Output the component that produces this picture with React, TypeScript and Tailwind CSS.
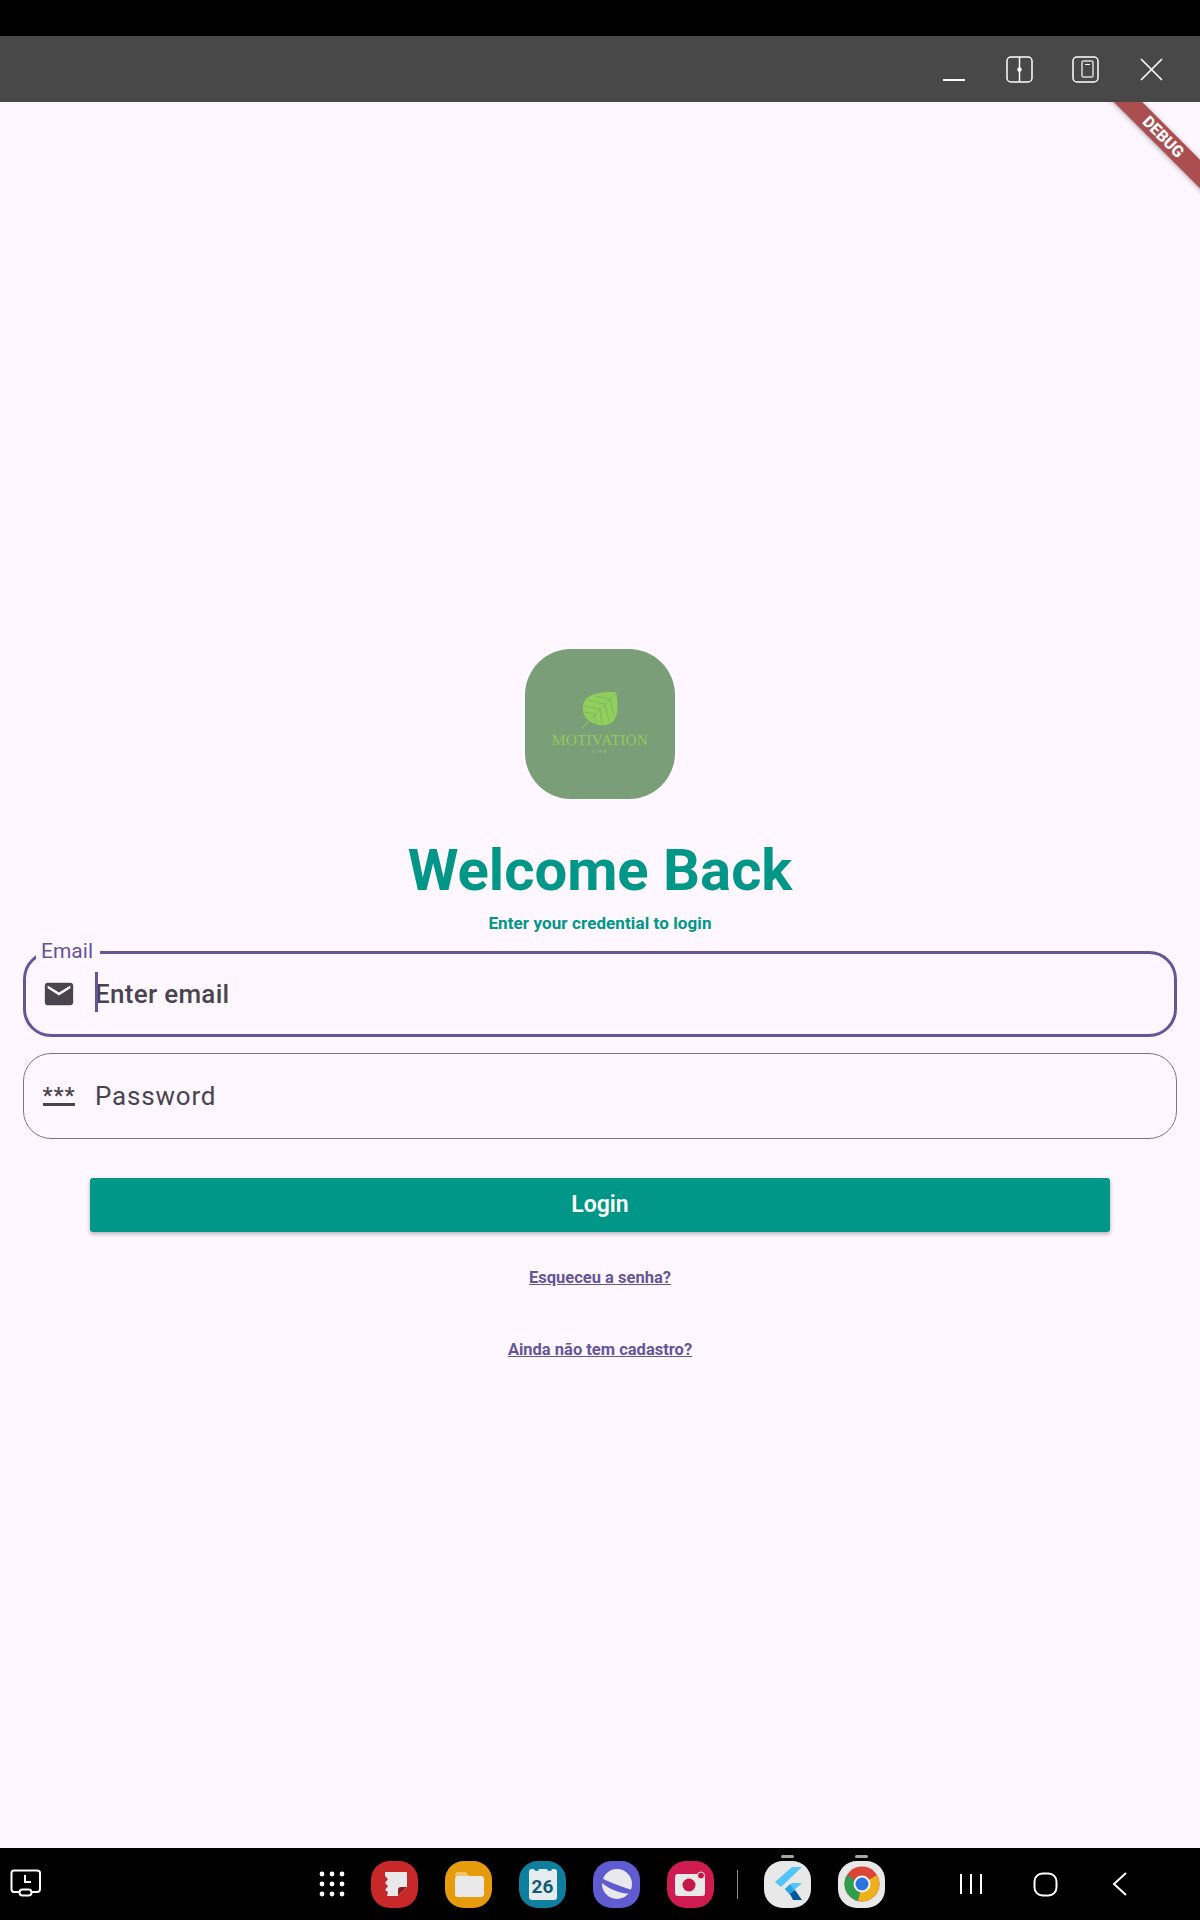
import { FC, ReactNode } from "react";

const roboto = "font-['Roboto',sans-serif]";

const LeafLogo: FC = () => (
  <svg width="38" height="38" viewBox="0 0 38 38">
    <path d="M1 37 L14 24" stroke="#8fcb5c" strokeWidth="1" fill="none" />
    <path
      d="M35 1 C26 1 11 1 5 8 C0 14 1 24 7 29 C14 35 27 37 33 29 C38 22 37 12 35 1 Z"
      fill="#8fcf5a"
    />
    <path
      d="M35 2 L10 28 M29 8 L14 5 M24 13 L7 9 M19 18 L3 15 M14 23 L3 21 M29 8 L33 24 M24 13 L28 31 M19 18 L21 33 M14 23 L15 32"
      stroke="#7a9e78"
      strokeWidth="0.6"
      fill="none"
    />
  </svg>
);

const MailIcon: FC = () => (
  <svg width="36" height="36" viewBox="0 0 24 24" fill="#49454f">
    <path d="M20 4H4c-1.100 0-1.990.900-1.990 2L2 18c0 1.100.900 2 2 2h16c1.100 0 2-.900 2-2V6c0-1.100-.900-2-2-2zm0 4l-8 5-8-5V6l8 5 8-5v2z" />
  </svg>
);

const Field: FC<{ icon: ReactNode; focused?: boolean; label: string }> = ({ icon, focused, label }) => (
  <div
    className={
      focused
        ? "relative flex h-[86px] items-center rounded-[28px] border-[3px] border-[#65559a] pl-[16px]"
        : "relative flex h-[86px] items-center rounded-[28px] border border-[#79747e] pl-[18px]"
    }
  >
    <div className="flex w-[34px] shrink-0 justify-center">{icon}</div>
    <div
      className={
        focused
          ? "relative ml-[19px] text-[26px] font-medium tracking-[0.3px] text-[#49454f]"
          : "ml-[19px] text-[26px] tracking-[0.8px] text-[#49454f]"
      }
    >
      {focused && <span className="absolute left-0 top-[-3px] h-[40px] w-[3px] bg-[#65559a]" />}
      {label}
    </div>
    {focused && (
      <span className="absolute left-[10px] top-[-16px] bg-[#fef7ff] pr-[7px] pl-[5px] text-[21px] leading-[26px] text-[#65559a]">
        Email
      </span>
    )}
  </div>
);

const Squircle: FC<{ bg: string; children: ReactNode; pill?: boolean }> = ({ bg, children, pill }) => (
  <div className={`relative flex h-[47px] w-[47px] items-center justify-center overflow-visible rounded-[40%] ${bg}`}>
    {pill && <span className="absolute left-[17px] top-[-6px] h-[3px] w-[13px] rounded-full bg-[#a6a6a6]" />}
    {children}
  </div>
);

const Dock: FC = () => (
  <div className="flex h-[72px] shrink-0 items-center bg-black">
    <svg className="ml-[10px]" width="32" height="30" viewBox="0 0 32 30" fill="none" stroke="#fff" strokeWidth="2">
      <path d="M10 23 H4 Q1.500 23 1.500 20 V4 Q1.500 1.500 4 1.500 H27 Q30 1.500 30 4 V20 Q30 23 27 23 H22" />
      <rect x="9.500" y="20.500" width="12" height="6" rx="3" />
      <path d="M15 6 V13 H21" />
    </svg>
    <svg className="ml-[277px]" width="26" height="26" viewBox="0 0 26 26" fill="#fff">
      {[3, 13, 23].map((y) =>
        [3, 13, 23].map((x) => <circle key={`${x}-${y}`} cx={x} cy={y} r="2.400" />)
      )}
    </svg>
    <div className="ml-[26px] flex items-center gap-[27px]">
      <Squircle bg="bg-[#c9282a]">
        <svg width="28" height="28" viewBox="0 0 28 28">
          <path d="M4 2 H26 V17 L17 26 H6 L7 22 L4 20 L7 16 L4 13 L7 9 L4 6 Z" fill="#e8e8e8" />
          <path d="M26 17 L17 26 V20 Q17 17 20 17 Z" fill="#8f1e1e" />
        </svg>
      </Squircle>
      <Squircle bg="bg-[#e59b0c]">
        <svg width="30" height="26" viewBox="0 0 30 26">
          <path d="M1 5 Q1 1 4 1 H12 L15 5 Z" fill="#f2c46c" />
          <rect x="1" y="5" width="29" height="21" rx="3" fill="#e9e9e9" />
        </svg>
      </Squircle>
      <Squircle bg="bg-[#0f7f9f]">
        <div className="relative mt-[1px] flex h-[31px] w-[28px] items-end justify-center rounded-[3px] bg-[#e6ecee] pb-[1px] font-['Roboto',sans-serif] text-[19px] leading-[24px] font-bold text-[#115a78]">
          <span className="absolute top-[-1px] left-[5px] h-[3px] w-[5px] rounded-b-full bg-[#0f7f9f]" />
          <span className="absolute top-[-1px] right-[5px] h-[3px] w-[5px] rounded-b-full bg-[#0f7f9f]" />
          26
        </div>
      </Squircle>
      <Squircle bg="bg-[#5f5bd0]">
        <svg width="40" height="36" viewBox="0 0 40 36">
          <circle cx="20" cy="18" r="15" fill="#e8e8ee" />
          <path d="M2 12 C8 20 24 28 37 26 C28 23 12 18 2 12 Z" fill="#5f5bd0" stroke="#5f5bd0" strokeWidth="2.500" />
        </svg>
      </Squircle>
      <Squircle bg="bg-[#cf1c50]">
        <svg width="32" height="26" viewBox="0 0 32 26">
          <rect x="0" y="3" width="30" height="22" rx="3" fill="#e9e9e9" />
          <circle cx="14" cy="14" r="6.500" fill="#c4174a" />
          <circle cx="26" cy="4.500" r="3.500" fill="#c4174a" stroke="#e9e9e9" strokeWidth="1" />
        </svg>
      </Squircle>
    </div>
    <div className="ml-[23px] h-[29px] w-px bg-[#8d8d8d]" />
    <div className="ml-[26px] flex items-center gap-[27px]">
      <Squircle bg="bg-[#e8e8e8]" pill>
        <svg width="30" height="36" viewBox="0 0 30 36">
          <path d="M19 1 H29 L8 21 L2 16 Z" fill="#54c5f8" />
          <path d="M19 17 H29 L17 28 L12 23 Z" fill="#54c5f8" />
          <path d="M12 23 L17 18 L23 27 L17 29 Z" fill="#29a6dc" />
          <path d="M17 28 L22 24 L29 34 H20 Z" fill="#01579b" />
        </svg>
      </Squircle>
      <Squircle bg="bg-[#e8e8e8]" pill>
        <svg width="36" height="36" viewBox="0 0 36 36">
          <circle cx="18" cy="18" r="17.500" fill="#db4437" />
          <path d="M18 18 L3 9 A17.500 17.500 0 0 0 14 35 Z" fill="#2f9e4f" />
          <path d="M18 18 L33 9 A17.500 17.500 0 0 1 14 35 Z" fill="#edb11d" />
          <circle cx="18" cy="18" r="8.500" fill="#f3f3f3" />
          <circle cx="18" cy="18" r="6.500" fill="#2a73e0" />
        </svg>
      </Squircle>
    </div>
    <svg className="ml-[74px]" width="24" height="24" viewBox="0 0 24 24" stroke="#fff" strokeWidth="2" fill="none">
      <path d="M2 2 V22 M12 2 V22 M22 2 V22" />
    </svg>
    <svg className="ml-[50px]" width="25" height="25" viewBox="0 0 25 25" stroke="#fff" strokeWidth="2" fill="none">
      <rect x="1.500" y="1.500" width="22" height="22" rx="8" />
    </svg>
    <svg className="ml-[54px]" width="16" height="26" viewBox="0 0 16 26" stroke="#fff" strokeWidth="2" fill="none">
      <path d="M14 2 L2 13 L14 24" />
    </svg>
  </div>
);

const App: FC = () => {
  return (
    <div className={`relative flex h-[1920px] w-[1200px] flex-col overflow-hidden bg-[#fef7ff] ${roboto}`}>
      <div className="relative z-10 h-[36px] shrink-0 bg-black" />
      <div className="relative z-10 flex h-[66px] shrink-0 items-center bg-[#484849] pl-[943px]">
        <div className="mt-[22px] h-[2px] w-[22px] bg-white" />
        <svg className="ml-[41px]" width="27" height="27" viewBox="0 0 27 27" fill="none" stroke="#fff" strokeWidth="1.500">
          <rect x="1" y="1" width="25" height="25" rx="4" />
          <path d="M13.500 1 V26" />
          <circle cx="13.500" cy="13.500" r="2.200" fill="#fff" stroke="none" />
        </svg>
        <svg className="ml-[39px]" width="27" height="27" viewBox="0 0 27 27" fill="none" stroke="#fff" strokeWidth="1.500">
          <rect x="1" y="1" width="25" height="25" rx="4" />
          <rect x="10" y="5" width="11" height="16" rx="1.500" stroke="#d8d8d8" />
          <path d="M13 8.500 H18" strokeWidth="1" />
        </svg>
        <svg className="ml-[41px]" width="23" height="23" viewBox="0 0 23 23" fill="none" stroke="#fff" strokeWidth="1.700">
          <path d="M1 1 L22 22 M22 1 L1 22" />
        </svg>
      </div>

      {/* debug banner */}
      <div className="absolute left-[1083px] top-[127px] flex h-[20px] w-[160px] rotate-45 items-center justify-center bg-[#ab4e50] text-[16px] leading-none font-extrabold text-white shadow-[0_1px_5px_rgba(0,0,0,0.35)]">
        DEBUG
      </div>

      <main className="flex flex-1 flex-col items-center">
        <div className="mt-[547px] flex h-[150px] w-[150px] flex-col items-center rounded-[46px] bg-[#7a9e78] pt-[42px]">
          <LeafLogo />
          <div className="mt-[2px] font-['Liberation_Serif',serif] text-[15.5px] leading-[18px] tracking-[0.1px] text-[#8fcb5c]">MOTIVATION</div>
          <div className="text-[4px] leading-[6px] tracking-[2px] text-[#a8d77e]">LIFE</div>
        </div>
        <h1 className="mt-[33px] text-[58px] leading-[76px] font-bold text-[#009688]">Welcome Back</h1>
        <p className="mt-[4px] text-[17px] leading-[22px] font-bold tracking-[0.1px] text-[#009688]">Enter your credential to login</p>
        <div className="mt-[17px] flex w-full flex-col gap-[16px] px-[23px]">
          <Field focused label="Enter email" icon={<MailIcon />} />
          <Field
            label="Password"
            icon={
              <div className="flex flex-col items-center text-[#49454f]">
                <span className="h-[14px] text-[22px] leading-[20px] font-bold tracking-[1px]">***</span>
                <span className="mt-[3px] h-[3px] w-[32px] bg-[#49454f]" />
              </div>
            }
          />
        </div>
        <button className="mt-[39px] h-[54px] w-[1020px] rounded-[3px] bg-[#009688] text-[23px] font-semibold text-white shadow-[0_2px_4px_rgba(0,0,0,0.3)]">
          Login
        </button>
        <a className="mt-[35px] text-[16.5px] leading-[22px] font-bold text-[#65559a] underline">Esqueceu a senha?</a>
        <a className="mt-[50px] text-[16.5px] leading-[22px] font-bold text-[#65559a] underline">Ainda não tem cadastro?</a>
      </main>

      <Dock />
    </div>
  );
};

export default App;
